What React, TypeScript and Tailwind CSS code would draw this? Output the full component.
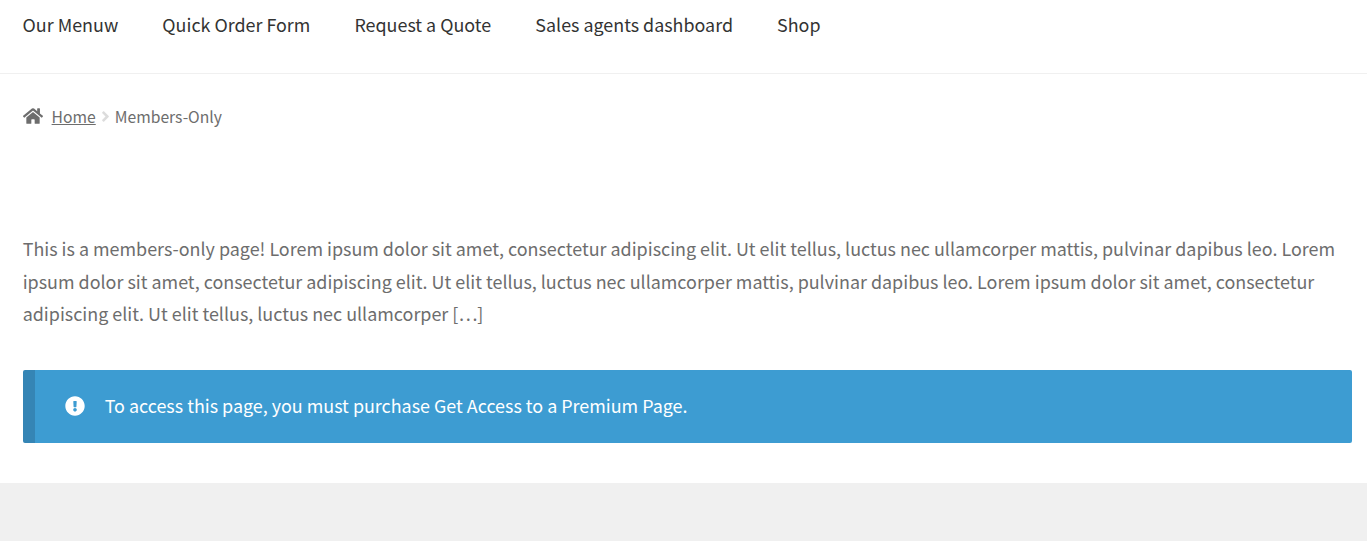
import { FaExclamationCircle, FaHome, FaAngleRight } from 'react-icons/fa';

const navItems = ['Our Menuw', 'Quick Order Form', 'Request a Quote', 'Sales agents dashboard', 'Shop'];

const lines = [
  'This is a members-only page! Lorem ipsum dolor sit amet, consectetur adipiscing elit. Ut elit tellus, luctus nec ullamcorper mattis, pulvinar dapibus leo. Lorem',
  'ipsum dolor sit amet, consectetur adipiscing elit. Ut elit tellus, luctus nec ullamcorper mattis, pulvinar dapibus leo. Lorem ipsum dolor sit amet, consectetur',
  'adipiscing elit. Ut elit tellus, luctus nec ullamcorper […]',
];

const Header = () => (
  <header className="h-[74px] border-b border-[#f0f0f0] px-[22.6px] pt-2">
    <nav className="flex gap-[44.1px] text-[17.9px] leading-8 text-[#333333]">
      {navItems.map((item) => (
        <a key={item} href="#" className="whitespace-nowrap">
          {item}
        </a>
      ))}
    </nav>
  </header>
);

const Breadcrumb = () => (
  <nav className="mt-[29px] flex h-[26px] items-center px-[22.6px] text-[15.7px] leading-[26px] text-[#6d6d6d]">
    <FaHome className="mr-[9px] size-5" />
    <a href="#" className="pt-0.5 underline">
      Home
    </a>
    <FaAngleRight className="mr-px ml-px size-[17px] text-[#dcdcdc]" />
    <span className="pt-0.5">Members-Only</span>
  </nav>
);

const Notice = () => (
  <div className="mt-10 flex h-[73px] items-center rounded-[2px] border-l-[12px] border-[#3585b5] bg-[#3d9cd2] pl-[30px] text-[17.91px] text-white">
    <FaExclamationCircle className="mr-5 size-5" />
    <p className="pb-0.5">To access this page, you must purchase Get Access to a Premium Page.</p>
  </div>
);

export default function App() {
  return (
    <div className="flex h-[541px] flex-col bg-white font-['Noto_Sans_CJK_SC',sans-serif]">
      <Header />
      <Breadcrumb />
      <main className="mt-[103px] pr-[15px] pl-[22.7px]">
        <div className="text-[17.91px] leading-[32.6px] text-[#6d6d6d]">
          {lines.map((line) => (
            <p key={line} className="whitespace-nowrap">
              {line}
            </p>
          ))}
        </div>
        <Notice />
      </main>
      <footer className="mt-10 grow bg-[#f0f0f0]" />
    </div>
  );
}
